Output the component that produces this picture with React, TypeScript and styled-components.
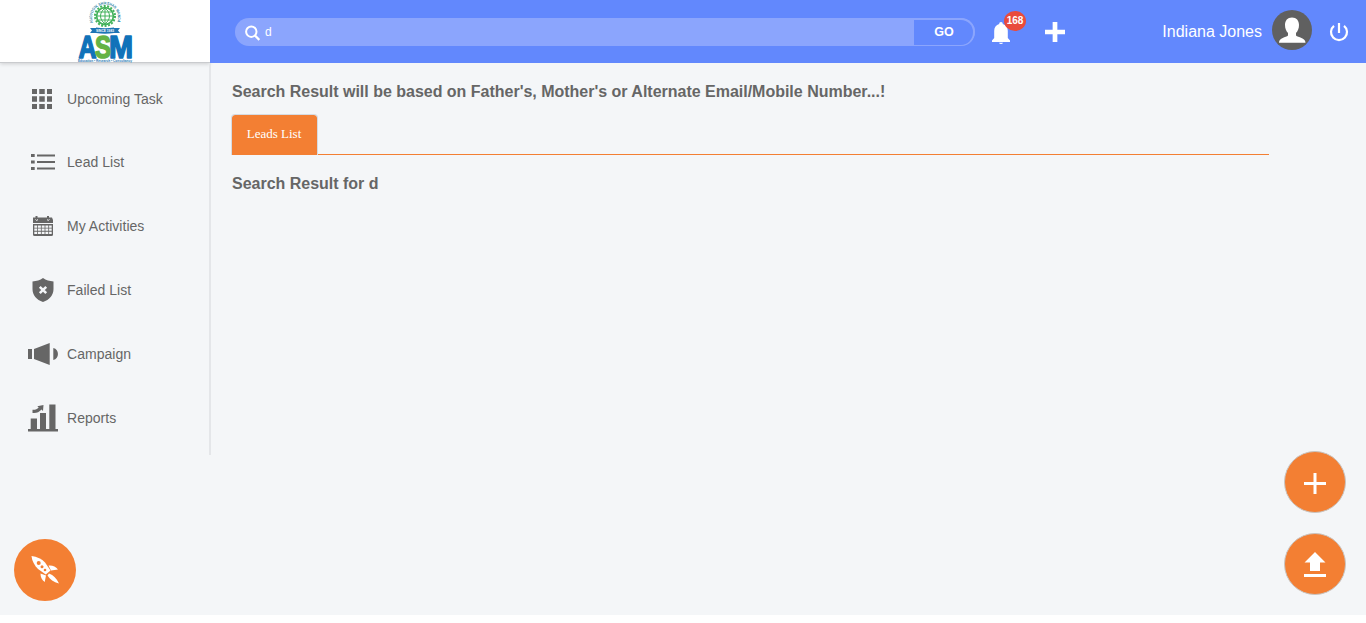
import React from 'react';
import styled, { createGlobalStyle } from 'styled-components';

const Global = createGlobalStyle`
  * { box-sizing: border-box; }
  body { margin: 0; background: #fff; font-family: "Liberation Sans", Arial, sans-serif; color: #666; }
  button, input { font-family: inherit; }
`;

const Page = styled.div`
  position: relative;
  height: 615px;
  background: #f4f6f8;
`;

const Header = styled.header`
  display: flex;
  height: 63px;
`;

const Brand = styled.div`
  width: 210px;
  height: 63px;
  background: #fff;
  border-bottom: 1px solid #c9cbce;
  box-shadow: 0 1px 4px rgba(0, 0, 0, 0.16);
  display: flex;
  justify-content: center;
  svg { flex: none; overflow: visible; }
`;

const TopBar = styled.div`
  flex: 1;
  display: flex;
  align-items: center;
  background: #6288fd;
  padding: 0 17px 0 25px;
`;

const SearchForm = styled.form`
  display: flex;
  width: 740px;
  height: 28px;
  margin-top: 1px;
  border-radius: 14px;
  overflow: hidden;
  background: #8ba5fd;
`;

const SearchField = styled.label`
  width: 679px;
  display: flex;
  align-items: center;
  padding-left: 10px;
  gap: 5px;
  svg { margin-top: 1px; }
`;

const SearchInput = styled.input`
  flex: 1;
  border: 0;
  padding: 0;
  outline: 0;
  background: transparent;
  color: #fff;
  font-size: 12px;
`;

const GoButton = styled.button`
  width: 61px;
  height: 28px;
  border: 1px solid #8ba5fd;
  border-width: 2px 2px 1px 0;
  border-radius: 0 14px 14px 0;
  background: #6288fd;
  color: #fff;
  font-size: 12.5px;
  font-weight: bold;
  padding: 0 0 2px 1px;
`;

const Notifications = styled.div`
  position: relative;
  width: 20px;
  height: 24px;
  margin: 4px 0 0 16px;
  svg { display: block; }
`;

const Badge = styled.span`
  position: absolute;
  left: 13px;
  top: -11px;
  width: 22px;
  height: 20px;
  border-radius: 50%;
  background: #e94b3c;
  color: #fff;
  font-size: 10px;
  font-weight: bold;
  line-height: 20px;
  text-align: center;
`;

const AddLink = styled.a`
  display: flex;
  margin: 1px 0 0 34px;
`;

const UserArea = styled.div`
  margin-left: auto;
  display: flex;
  align-items: center;
  color: #fff;
  font-size: 16px;
`;

const Avatar = styled.span`
  width: 40px;
  height: 40px;
  margin: -3px 17px 0 10px;
  border-radius: 50%;
  overflow: hidden;
  background: #606060;
`;

const Body = styled.div`
  display: flex;
  align-items: flex-start;
`;

const Sidebar = styled.nav`
  width: 211px;
  height: 392px;
  padding-top: 4px;
  border-right: 2px solid #e4e6e9;
`;

const NavItem = styled.a<{ $short?: boolean }>`
  display: flex;
  align-items: center;
  gap: 9px;
  height: ${(p) => (p.$short ? 63 : 64)}px;
  padding-left: 28px;
  font-size: 14px;
  letter-spacing: 0.03px;
  color: #666;
`;

const Main = styled.main`
  flex: 1;
  padding: 19px 97px 0 20px;
`;

const Title = styled.h1`
  margin: 0 0 0 1px;
  font-size: 16px;
  line-height: 20px;
  font-weight: bold;
  letter-spacing: -0.012px;
`;

const Tabs = styled.div`
  display: flex;
  height: 42px;
  margin: 11px 0 19px;
  border-bottom: 1px solid #f37f33;
`;

const Tab = styled.button`
  width: 87px;
  height: 41px;
  margin-top: 1px;
  padding: 0 1px 3px 0;
  border: 1px solid #d5dbe2;
  border-bottom: 0;
  border-radius: 4px 4px 0 0;
  background: #f37f33;
  background-clip: padding-box;
  color: #fff;
  font: 13px "Liberation Serif", "Times New Roman", serif;
`;

const FloatButton = styled.button<{ $top: number; $left: number; $ring?: boolean }>`
  position: absolute;
  top: ${(p) => p.$top}px;
  left: ${(p) => p.$left}px;
  width: 62px;
  height: 62px;
  padding: 0;
  border: ${(p) => (p.$ring ? '1px solid #c9c4c0' : '0')};
  border-radius: 50%;
  background: #f37f33;
  display: flex;
  align-items: center;
  justify-content: center;
`;

const Logo = () => (
  <svg width="60" height="63" viewBox="0 0 60 63">
    <defs>
      <path id="ring" d="M18 22.500 A13 13 0 1 1 42 22.500" />
    </defs>
    <text fontSize="3.900" fontWeight="bold" fill="#2d7fa5">
      <textPath href="#ring" textLength="52" lengthAdjust="spacingAndGlyphs">AUDYOGIK SHIKSHAN MANDAL</textPath>
    </text>
    <circle cx="30" cy="16" r="10" fill="none" stroke="#43b25b" strokeWidth="2" strokeDasharray="2 1.5" />
    <circle cx="30" cy="16" r="8.4" fill="#fff" stroke="#43b25b" strokeWidth="1.7" />
    <path d="M30 8v16M22 16h16M23.5 12h13M23.5 20h13M30 8c-6 5-6 11 0 16M30 8c6 5 6 11 0 16" fill="none" stroke="#43b25b" strokeWidth="1" />
    <path d="M15 28h6v-.5q9 1.500 18 0v.5h6l-2 2.500 2 2.500h-6q-9 1.500-18 0h-6l2-2.500z" fill="#1d75b5" />
    <text x="30" y="32" fontSize="3.600" fontWeight="bold" fill="#fff" textAnchor="middle" textLength="18" lengthAdjust="spacingAndGlyphs">SINCE 1983</text>
    <g fontFamily="Liberation Sans" fontWeight="bold" strokeWidth="1.600" strokeLinejoin="round">
      <text x="3.500" y="58" fontSize="32" fill="#1072b9" stroke="#1072b9" textLength="18" lengthAdjust="spacingAndGlyphs">A</text>
      <text x="34" y="58" fontSize="32" fill="#1072b9" stroke="#1072b9" textLength="24" lengthAdjust="spacingAndGlyphs">M</text>
      <text x="20" y="57.800" fontSize="31" fill="#65b345" stroke="#65b345" textLength="16" lengthAdjust="spacingAndGlyphs">S</text>
    </g>
    <text x="3" y="62.300" fontSize="3.800" fontWeight="bold" fill="#2679b5" textLength="54" lengthAdjust="spacingAndGlyphs">Education • Research • Consultancy</text>
  </svg>
);

const NavIcon = ({ children }: { children: React.ReactNode }) => (
  <svg width="30" height="30" viewBox="0 0 30 30" fill="#666">{children}</svg>
);

const items = [
  {
    label: 'Upcoming Task',
    icon: <path d="M4 5h5v5H4zM11.250 5h5.500v5h-5.500zM19 5h5v5h-5zM4 12.250h5v5.500H4zM11.250 12.250h5.500v5.500h-5.500zM19 12.250h5v5.500h-5zM4 20h5v5H4zM11.250 20h5.500v5h-5.500zM19 20h5v5h-5z" />,
  },
  {
    label: 'Lead List',
    icon: <path d="M3 7h3.700v3H3zM9 7.500h18v2H9zM3 13.500h3.700v3H3zM9 14h18v2H9zM3 20h3.700v3H3zM9 20.500h18v2H9z" />,
  },
  {
    label: 'My Activities',
    icon: (
      <>
        <path d="M5 6.500h2.500V5h2v1.500h9.500V5h2v1.500h3L25 9v3H5V9z" />
        <path d="M5 13h20v10.500q0 1.500-1.500 1.500h-17Q5 25 5 23.500z" />
        <path d="M6.300 14.500h2.900v2.200H6.300zm3.700 0h2.900v2.200H10zm3.700 0h2.900v2.200h-2.900zm3.700 0h2.900v2.200h-2.900zm3.700 0h2.600v2.200h-2.600zM6.300 17.600h2.900v2.200H6.300zm3.700 0h2.900v2.200H10zm3.700 0h2.900v2.200h-2.900zm3.700 0h2.900v2.200h-2.900zm3.700 0h2.600v2.200h-2.600zM6.300 20.700h2.900v2.200H6.300zm3.700 0h2.900v2.200H10zm3.700 0h2.900v2.200h-2.900zm3.700 0h2.900v2.200h-2.900zm3.700 0h2.600v2.200h-2.600z" fill="#f4f6f8" />
        <path d="M7.500 8.500q1 2 2.500 0M19 8.500q1 2 2.500 0" stroke="#f4f6f8" fill="none" />
      </>
    ),
  },
  {
    label: 'Failed List',
    icon: (
      <>
        <path d="M15 3c3 2.300 6.500 3 10.500 3.500V14c0 6-4 11-10.500 13C8.500 25 4.500 20 4.500 14V6.500C8.500 6 12 5.300 15 3z" />
        <path d="M11.800 11.800l6.400 6.400M18.200 11.800l-6.400 6.400" stroke="#f4f6f8" strokeWidth="2.500" />
      </>
    ),
  },
  {
    label: 'Campaign',
    icon: <path d="M0 10h4v10H0zM6 10L21.700 4v22L6 20zM25.300 9c6.200 1 6.200 11 0 12z" />,
  },
  {
    label: 'Reports',
    icon: (
      <path d="M0 26h30v2.500H0zM2.700 15.500h6.300V26H2.700zM12 10h6v16h-6zM21.300 1.500h6.200V26h-6.200zM4.500 6.800C7 7 9 6.500 10.700 4.500L9.300 3.300 15.500 2l-.5 6-1.500-1.400C11 9.500 8 10.500 4.500 10z" />
    ),
  },
];

export default function App() {
  return (
    <>
      <Global />
      <Page>
        <Header>
          <Brand><Logo /></Brand>
          <TopBar>
            <SearchForm>
              <SearchField>
                <svg width="15" height="16" viewBox="0 0 15 16" fill="none" stroke="#fff" strokeWidth="2">
                  <circle cx="6.300" cy="6.700" r="5.200" />
                  <path d="M10 10.500l4.300 4.500" strokeWidth="2.300" />
                </svg>
                <SearchInput defaultValue="d" aria-label="Search" />
              </SearchField>
              <GoButton type="button">GO</GoButton>
            </SearchForm>
            <Notifications>
              <svg width="20" height="24" viewBox="0 0 20 24" fill="#fff">
                <path d="M10 0c1.200 0 1.800.8 1.800 2 3.200.8 5 3.400 5 6.800V16l2.200 2.500V20H1v-1.500L3.200 16V8.800C3.200 5.400 5 2.800 8.200 2 8.200.8 8.800 0 10 0zM8 20.700h4q-.3 1.300-2 1.300t-2-1.300z" />
              </svg>
              <Badge>168</Badge>
            </Notifications>
            <AddLink>
              <svg width="20" height="20" viewBox="0 0 20 20"><path d="M10 0v20M0 10h20" stroke="#fff" strokeWidth="4.700" /></svg>
            </AddLink>
            <UserArea>
              <span>Indiana Jones</span>
              <Avatar>
                <svg width="40" height="40" viewBox="0 0 40 40" fill="#fff">
                  <path d="M20 7.500c4.500 0 7 3 7 7.500 0 3.500-1.200 6-3 8v2.500c2 2 9.500 2 9.500 7.300H7c0-5.300 7-5.300 9-7.300V23c-1.800-2-3-4.500-3-8 0-4.500 2.500-7.500 7-7.500z" />
                </svg>
              </Avatar>
              <svg width="20" height="20" viewBox="0 0 20 20" fill="none" stroke="#fff" strokeWidth="2.200">
                <path d="M10 1v10M5 3.800a8 8 0 1 0 10 0" />
              </svg>
            </UserArea>
          </TopBar>
        </Header>
        <Body>
          <Sidebar>
            {items.map((item, i) => (
              <NavItem key={item.label} $short={i === 0}>
                <NavIcon>{item.icon}</NavIcon>
                {item.label}
              </NavItem>
            ))}
          </Sidebar>
          <Main>
            <Title>Search Result will be based on Father's, Mother's or Alternate Email/Mobile Number...!</Title>
            <Tabs><Tab>Leads List</Tab></Tabs>
            <Title as="h2">Search Result for d</Title>
          </Main>
        </Body>
        <FloatButton $top={451} $left={1284} $ring aria-label="Add">
          <svg width="22" height="24" viewBox="0 0 22 24"><path d="M11 3v21M0 13.500h22" stroke="#fff" strokeWidth="3" /></svg>
        </FloatButton>
        <FloatButton $top={533} $left={1284} $ring aria-label="Upload">
          <svg width="22" height="26" viewBox="0 0 22 26" fill="#fff"><path d="M11 1l10.500 10.500H16V20H6v-8.500H.5zM0 23h22v3H0z" /></svg>
        </FloatButton>
        <FloatButton $top={539} $left={14} aria-label="Launch">
          <svg width="30" height="30" viewBox="0 0 30 30" fill="#fff">
            <path d="M1.500 1c5.500.8 10.500 3 13.500 6.500l5.500 8-4.700 4L8 14C4.500 10.500 2 6 1.500 1z" />
            <path d="M18.500 10.500c4-.5 7 1 9.500 4l-7 1zM10.500 18.500l5.500 2-1.300 6.500c-3-2-4.200-5-4.200-8.500zM19 18.500c4.500 1.500 7.500 5 10 10-5.500-1.500-9-4-11.500-8z" />
            <g fill="#f37f33"><circle cx="8.700" cy="8" r="2" /><circle cx="12" cy="11.700" r="1.500" /><circle cx="15" cy="15" r="1.300" /></g>
          </svg>
        </FloatButton>
      </Page>
    </>
  );
}
